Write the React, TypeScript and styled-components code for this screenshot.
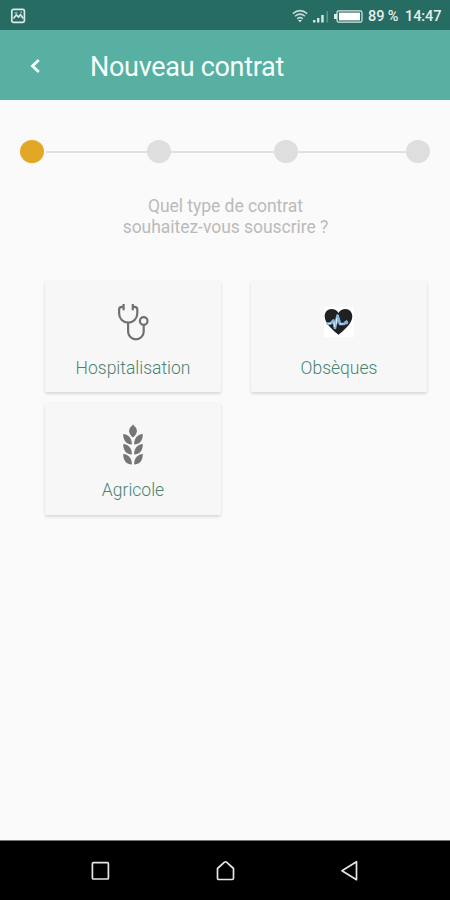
import React from "react";
import styled, { createGlobalStyle } from "styled-components";

const GlobalStyle = createGlobalStyle`
  *, *::before, *::after { box-sizing: border-box; }
  body { margin: 0; font-family: Roboto, sans-serif; background: #fafafa; }
  svg { display: block; flex: none; }
`;

const Screen = styled.div`
  display: flex;
  flex-direction: column;
  width: 450px;
  height: 900px;
  overflow: hidden;
  background: #fafafa;
`;

const StatusBar = styled.header`
  display: flex;
  align-items: center;
  justify-content: space-between;
  height: 30px;
  flex: none;
  padding: 2px 9px 0 10px;
  background: #276c63;
`;

const StatusIcons = styled.div`
  display: flex;
  align-items: center;
  gap: 5px;
`;

const StatusText = styled.span<{ $width: number }>`
  width: ${(p) => p.$width}px;
  padding-top: 1px;
  color: #e4efed;
  font-size: 14.5px;
  font-weight: 500;
  line-height: 18px;
  white-space: nowrap;
  letter-spacing: -0.1px;
`;

const AppBar = styled.div`
  display: flex;
  align-items: center;
  height: 70px;
  flex: none;
  padding: 2px 0 0 28px;
  background: #58b0a3;
`;

const BackButton = styled.button`
  display: flex;
  padding: 0;
  border: 0;
  background: none;
`;

const Title = styled.h1`
  margin: 2px 0 0 48px;
  color: #f7fffd;
  font-size: 27px;
  font-weight: 400;
  line-height: 34px;
  white-space: nowrap;
  letter-spacing: -0.3px;
`;

const Content = styled.main`
  flex: 1;
`;

const Stepper = styled.div`
  display: flex;
  align-items: center;
  padding: 40px 19px 0 20px;
`;

const Step = styled.span<{ $active?: boolean }>`
  width: 24px;
  height: 23px;
  flex: none;
  border-radius: 50%;
  background: ${(p) => (p.$active ? "#e2a725" : "#dedede")};
`;

const Connector = styled.span<{ $width: number; $inset?: number }>`
  width: ${(p) => p.$width}px;
  height: 2px;
  padding-left: ${(p) => p.$inset ?? 0}px;
  background: #e1e1e1;
  background-clip: content-box;
`;

const Question = styled.p`
  margin: 33px 0 0;
  padding-left: 1px;
  color: #bababa;
  font-size: 17.5px;
  line-height: 21px;
  text-align: center;
  letter-spacing: -0.04px;
`;

const Cards = styled.div`
  display: grid;
  grid-template-columns: 176px 176px;
  grid-template-rows: 111px 112px;
  gap: 11px 30px;
  margin: 43px 0 0 45px;
`;

const Card = styled.button`
  display: flex;
  flex-direction: column;
  align-items: center;
  padding: 17px 0 0;
  border: 0;
  border-radius: 2px;
  background: #f7f7f7;
  box-shadow: 0 2px 3px rgba(0, 0, 0, 0.12), 0 0 3px rgba(0, 0, 0, 0.04);
`;

const CardIcon = styled.span`
  display: flex;
  align-items: center;
  justify-content: center;
  width: 50px;
  height: 48px;
`;

const CardLabel = styled.span`
  margin-top: 11px;
  color: #498374;
  font-family: Roboto, sans-serif;
  font-size: 17.5px;
  font-weight: 300;
  line-height: 22px;
`;

const NavBar = styled.nav`
  display: flex;
  align-items: center;
  justify-content: space-between;
  height: 60px;
  flex: none;
  padding: 0 91px 0 90px;
  border-top: 1px solid #777;
  background: #000;
`;

const PictureIcon = () => (
  <svg width="16" height="16" viewBox="0 0 16 16" fill="none" stroke="#dce9e7" strokeWidth="1.7">
    <rect x="1.8" y="1.4" width="12.6" height="13" rx="1.6" />
    <path d="M3.5 10.5 6.3 7l2.4 2 1.8-2.4 2.7 4" />
    <path d="M4.5 5h3M10.5 4.2h1.5" strokeWidth="1" />
  </svg>
);

const WifiIcon = () => (
  <svg width="16" height="14" viewBox="0 0 16 14" fill="none" stroke="#c3dad6" strokeWidth="1.5">
    <path d="M.8 4.6Q8-1.4 15.2 4.6M3 7.3Q8 3 13 7.3M5.2 9.8Q8 7.5 10.8 9.8" />
    <path d="M6 11h4l-2 2.2z" fill="#e8f3f1" stroke="none" />
  </svg>
);

const SignalIcon = () => (
  <svg width="16" height="13" viewBox="0 0 16 13">
    <path d="M0 10h2.4v2.5H0zM4 8h2.4v4.5H4zM8.2 5h2.5v7.5H8.2z" fill="#d6e7e4" />
    <path d="M13.5 1H15v11.5h-1.5z" fill="#5c938b" />
  </svg>
);

const BatteryIcon = () => (
  <svg width="29" height="13" viewBox="0 0 29 13">
    <path d="M0 4h3v5H0z" fill="#dce9e7" />
    <rect x="3" y=".8" width="25" height="11.4" rx="1.8" fill="none" stroke="#dce9e7" strokeWidth="1.2" />
    <rect x="5" y="2.6" width="21" height="7.8" fill="#fff" />
  </svg>
);

const BackIcon = () => (
  <svg width="14" height="18" viewBox="0 0 14 18" fill="none" stroke="#f7fffd" strokeWidth="2.8">
    <path d="M10.8 3 4.5 9l6.3 6" />
  </svg>
);

const StethoscopeIcon = () => (
  <svg width="34" height="40" viewBox="0 0 34 40" fill="none" stroke="#707070" strokeWidth="2.2">
    <path d="M7.6 2v6.2M7.6 4.8H5.9q-2.8 0-2.8 2.8v3.9a9.1 9.1 0 0 0 18.2 0V7.6q0-2.8-2.8-2.8h-1.7M16.8 2v6.2" />
    <path d="M12.1 20.6v8.9a7.8 7.8 0 0 0 15.6 0v-6.7" />
    <circle cx="27.7" cy="19" r="3.8" />
  </svg>
);

const HeartPulseIcon = () => (
  <svg width="30" height="30" viewBox="0 0 30 30">
    <path d="M0 0h30v30H0z" fill="#fff" />
    <path d="M14.5 27.7C10 24 1 17 .7 9.7.5 4.8 3.7 2 7.5 2c3 0 5.700 1.300 7 4 1.300-2.700 4-4 7-4 3.800 0 6.900 2.900 6.800 7.700C28.100 17 19 24 14.500 27.700z" fill="#202123" />
    <path d="M2.500 16.500H6.500L9.500 13.500l1.500 7.500 2.500-12.500 2.500 8.500h4l1.500-1.500" fill="none" stroke="#86b5dc" strokeWidth="2.7" strokeLinejoin="round" />
    <path d="M12.5 11v6M4 16.5h3M10 15l.7 5M16 17h3" stroke="#d5e9fa" strokeWidth="1.2" fill="none" />
    <circle cx="22.3" cy="15.6" r="2" fill="#86b5dc" />
    <path d="M22.6 17v-4" stroke="#78a8cf" strokeWidth="1" />
  </svg>
);

const WheatIcon = () => (
  <svg width="22" height="42" viewBox="0 -0.8 22 42" fill="#757575">
    <path d="M11 .8q7.400 6.200.8 12.400h-1.600Q3.600 7 11 .8z" />
    {[10.3, 20.3, 30.3].map((y) => (
      <g key={y} transform={`translate(0 ${y})`}>
        <path d="M1.200 0C6 .4 9.900 3.500 9.900 10.300 4.500 10.300 1.200 7 1.200 0z" />
        <path d="M20.800 0C16 .4 12.100 3.500 12.100 10.300 17.500 10.300 20.800 7 20.800 0z" />
      </g>
    ))}
  </svg>
);

const RecentsIcon = () => (
  <svg width="21" height="20" viewBox="0 0 21 20" fill="none" stroke="#e6e6e6" strokeWidth="1.7">
    <rect x="2.4" y="1.7" width="16" height="16.3" rx="1" />
  </svg>
);

const HomeIcon = () => (
  <svg width="20" height="22" viewBox="0 0 20 22" fill="none" stroke="#e6e6e6" strokeWidth="1.7" strokeLinejoin="round">
    <path d="M1.500 8.500 8.500 2.200q1-.8 2 0l7 6.300v9.700q0 1.300-1.300 1.300H2.800Q1.500 19.500 1.500 18.200z" />
  </svg>
);

const NavBackIcon = () => (
  <svg width="18" height="22" viewBox="0 0 18 22" fill="none" stroke="#e6e6e6" strokeWidth="1.7" strokeLinejoin="round">
    <path d="M15.500 1.700v18L1 10.700z" />
  </svg>
);

const contracts = [
  { label: "Hospitalisation", icon: <StethoscopeIcon /> },
  { label: "Obsèques", icon: <HeartPulseIcon /> },
  { label: "Agricole", icon: <WheatIcon /> },
];

export default function App() {
  return (
    <Screen>
      <GlobalStyle />
      <StatusBar>
        <PictureIcon />
        <StatusIcons>
          <WifiIcon />
          <SignalIcon />
          <BatteryIcon />
          <StatusText $width={32}>89 %</StatusText>
          <StatusText $width={36}>14:47</StatusText>
        </StatusIcons>
      </StatusBar>
      <AppBar>
        <BackButton aria-label="Retour">
          <BackIcon />
        </BackButton>
        <Title>Nouveau contrat</Title>
      </AppBar>
      <Content>
        <Stepper>
          <Step $active />
          <Connector $width={103} $inset={2} />
          <Step />
          <Connector $width={103} />
          <Step />
          <Connector $width={108} />
          <Step />
        </Stepper>
        <Question>
          Quel type de contrat
          <br />
          souhaitez-vous souscrire ?
        </Question>
        <Cards>
          {contracts.map(({ label, icon }) => (
            <Card key={label}>
              <CardIcon>{icon}</CardIcon>
              <CardLabel>{label}</CardLabel>
            </Card>
          ))}
        </Cards>
      </Content>
      <NavBar>
        <RecentsIcon />
        <HomeIcon />
        <NavBackIcon />
      </NavBar>
    </Screen>
  );
}
